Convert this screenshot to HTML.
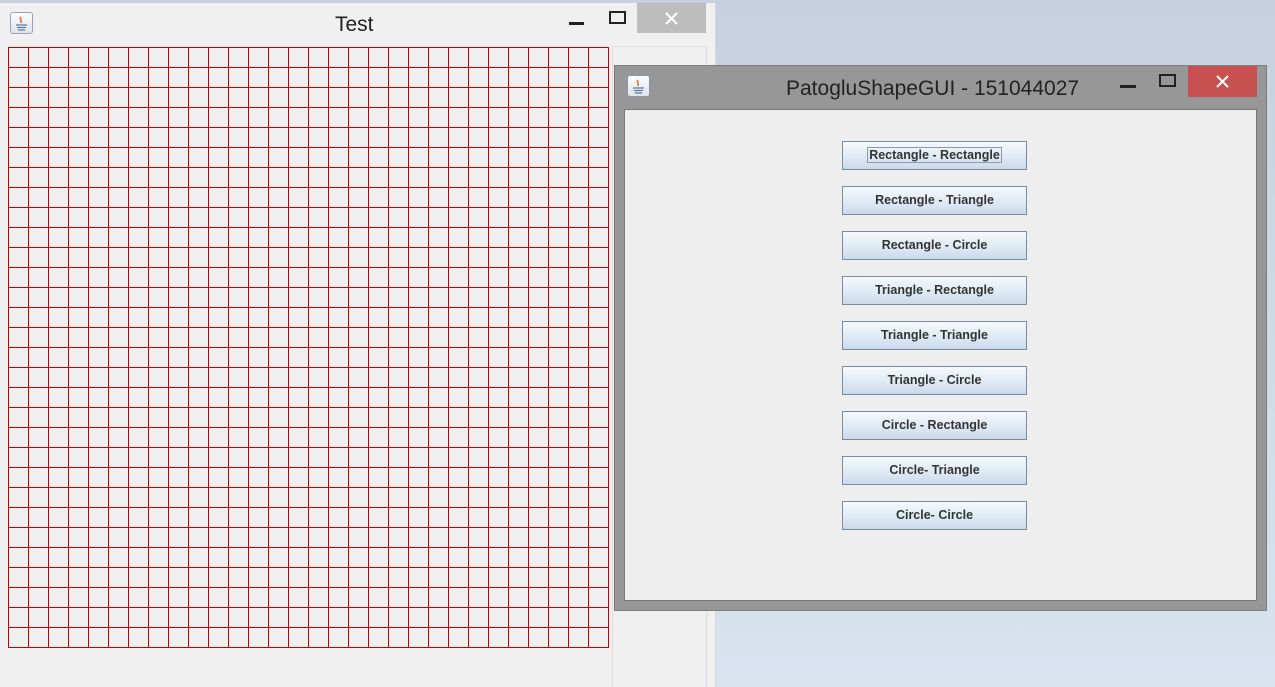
<!DOCTYPE html>
<html><head><meta charset="utf-8"><style>
*{margin:0;padding:0;box-sizing:border-box}
body{width:1275px;height:687px;overflow:hidden;position:relative;background:linear-gradient(#c6d0e0,#d9e3f0);font-family:"Liberation Sans",sans-serif}
.abs{position:absolute}
.lw{left:0;top:3px;width:716px;height:684px;background:#f0f0f0;border-right:1px solid #d8d8d8}
.title{font-family:"Liberation Sans",sans-serif;color:#222}
.btn{position:absolute;left:842px;width:185px;height:29px;border:1px solid #7a8a9f;background:linear-gradient(#f6f9fc,#dde8f3 60%,#c9d9ea);font:bold 12.5px "Liberation Sans",sans-serif;color:#333;text-align:center;line-height:27px}
.ic{width:23px;height:22px;border:1px solid #9aa4b0;border-radius:3px;background:linear-gradient(#fbfcfd,#dfe4ea)}
</style></head><body>
<div class="abs lw"></div>
<div class="abs ic" style="left:10px;top:12px"><svg width="21" height="20"><path d="M10 4c-2 2 1 3 0 6" stroke="#e07020" stroke-width="1.6" fill="none"/><path d="M5 12h11M6 14.5h9M7 17h7" stroke="#5a7aa0" stroke-width="1.2"/></svg></div>
<div class="abs title" style="left:335px;top:13px;font-size:21px">Test</div>
<div class="abs" style="left:569px;top:22px;width:15px;height:3px;background:#222"></div>
<div class="abs" style="left:609px;top:11px;width:17px;height:13px;border:2px solid #222"></div>
<div class="abs" style="left:637px;top:3px;width:69px;height:30px;background:#bdbdbd"><svg width="69" height="30"><path d="M29 10l11 11M40 10L29 21" stroke="#fff" stroke-width="2"/></svg></div>
<div class="abs" style="left:612px;top:46px;width:95px;height:641px;border:1px solid #dcdcdc;border-bottom:none"></div>
<svg class="abs" style="left:0;top:0" width="620" height="660" shape-rendering="crispEdges">
<path stroke="#c80000" fill="none" d="M8.5 47V648M28.5 47V648M48.5 47V648M68.5 47V648M88.5 47V648M108.5 47V648M128.5 47V648M148.5 47V648M168.5 47V648M188.5 47V648M208.5 47V648M228.5 47V648M248.5 47V648M268.5 47V648M288.5 47V648M308.5 47V648M328.5 47V648M348.5 47V648M368.5 47V648M388.5 47V648M408.5 47V648M428.5 47V648M448.5 47V648M468.5 47V648M488.5 47V648M508.5 47V648M528.5 47V648M548.5 47V648M568.5 47V648M588.5 47V648M608.5 47V648M8 47.5H609M8 67.5H609M8 87.5H609M8 107.5H609M8 127.5H609M8 147.5H609M8 167.5H609M8 187.5H609M8 207.5H609M8 227.5H609M8 247.5H609M8 267.5H609M8 287.5H609M8 307.5H609M8 327.5H609M8 347.5H609M8 367.5H609M8 387.5H609M8 407.5H609M8 427.5H609M8 447.5H609M8 467.5H609M8 487.5H609M8 507.5H609M8 527.5H609M8 547.5H609M8 567.5H609M8 587.5H609M8 607.5H609M8 627.5H609M8 647.5H609"/>
</svg>
<div class="abs" style="left:614px;top:65px;width:653px;height:546px;background:#979797;border:1px solid #7d7d7d"></div>
<div class="abs" style="left:624px;top:109px;width:633px;height:492px;background:#eeeeee;border:1px solid #777"></div>
<div class="abs ic" style="left:627px;top:75px;border-color:#8a96a5"><svg width="21" height="20"><path d="M10 4c-2 2 1 3 0 6" stroke="#e07020" stroke-width="1.6" fill="none"/><path d="M5 12h11M6 14.5h9M7 17h7" stroke="#5a7aa0" stroke-width="1.2"/></svg></div>
<div class="abs title" style="left:786px;top:77px;font-size:21px">PatogluShapeGUI - 151044027</div>
<div class="abs" style="left:1120px;top:85px;width:16px;height:3px;background:#222"></div>
<div class="abs" style="left:1159px;top:74px;width:17px;height:13px;border:2px solid #222"></div>
<div class="abs" style="left:1188px;top:66px;width:69px;height:31px;background:#c75050"><svg width="69" height="31"><path d="M29 10l11 11M40 10L29 21" stroke="#fff" stroke-width="2"/></svg></div>
<div class="btn" style="top:141px"><span style="border:1px solid #8a9ab0;padding:0 1px">Rectangle - Rectangle</span></div>
<div class="btn" style="top:186px">Rectangle - Triangle</div>
<div class="btn" style="top:231px">Rectangle - Circle</div>
<div class="btn" style="top:276px">Triangle - Rectangle</div>
<div class="btn" style="top:321px">Triangle - Triangle</div>
<div class="btn" style="top:366px">Triangle - Circle</div>
<div class="btn" style="top:411px">Circle - Rectangle</div>
<div class="btn" style="top:456px">Circle- Triangle</div>
<div class="btn" style="top:501px">Circle- Circle</div>
</body></html>
